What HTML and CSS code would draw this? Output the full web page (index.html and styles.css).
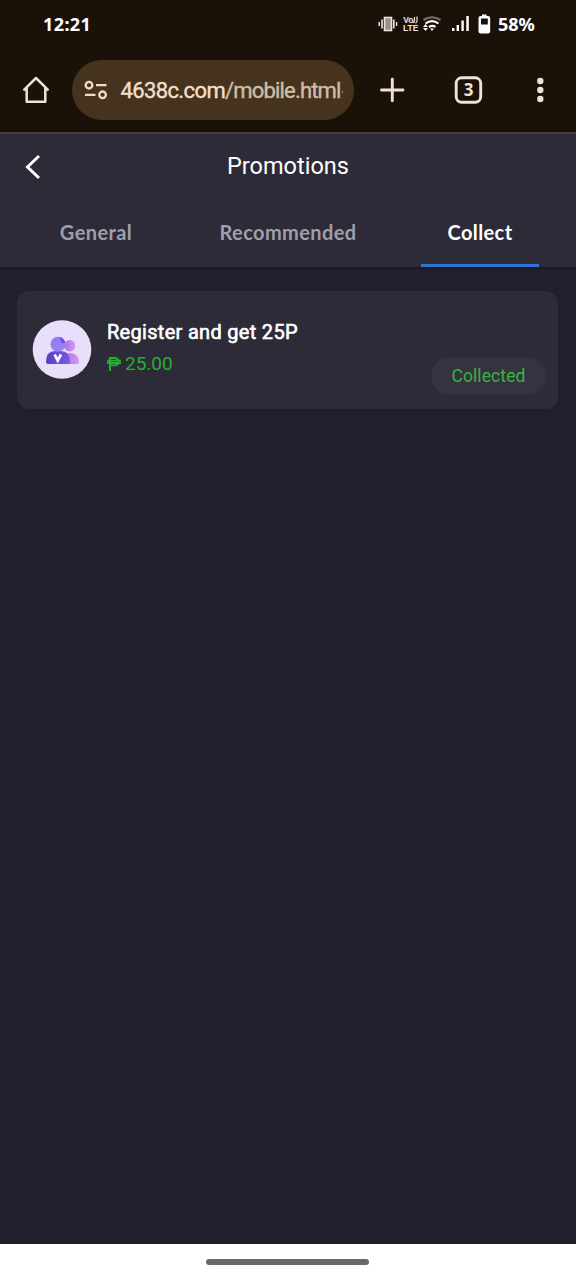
FILE: index.html
```html
<!DOCTYPE html>
<html lang="en">
<head>
<meta charset="utf-8">
<meta name="viewport" content="width=device-width, initial-scale=1">
<title>Promotions</title>
<link rel="stylesheet" href="styles.css">
</head>
<body>
<div class="screen">
  <div class="status">
    <span class="time">12:21</span>
    <svg class="status-icons" width="114" height="24" viewBox="378 12 114 24">
      <g fill="#e8e4e0">
        <path d="M378.500 22h1.500v4h-1.500zM381.200 19.500h1.600v9h-1.600zM393 19.500h1.600v9H393zM395.800 22h1.500v4h-1.500z"/>
        <rect x="384.500" y="17.500" width="7" height="13" fill="#96918c" stroke="#e8e4e0" stroke-width="1.600"/>
      </g>
      <path d="M414.500 17v3.500q0 2-2 2M417 16.500v4q0 2-1.500 2.500" fill="none" stroke="#e8e4e0" stroke-width="1.200"/>
      <text class="lte"><tspan x="403.300" y="22.600">Vo</tspan><tspan x="403" y="31">LTE</tspan></text>
      <g fill="none" stroke-width="2.100">
        <path d="M423.500 20q8.500-5.500 17 0" stroke="#77716b"/>
        <path d="M425.500 23.500q6.500-4.800 13 0M429 27q3.500-2.300 6.500 0" stroke="#fff"/>
      </g>
      <path d="M425.500 24l2.500 3h-5zM423 28h5l-2.500 3zM430 28.500h4l-2 2.500z" fill="#fff"/>
      <path d="M452 28h2.400v3H452zM456.600 25h2.400v6h-2.400zM461.400 20.500h2.400V31h-2.400zM466.300 16h2.500v15h-2.500z" fill="#fff"/>
      <path fill-rule="evenodd" fill="#fff" d="M482 14.500h4.500V16h1.500q2.200 0 2.200 2.200v13q0 2.200-2.200 2.200h-7.300q-2.200 0-2.200-2.200v-13q0-2.200 2.200-2.200H482zM481 18.600v6h6.800v-6z"/>
    </svg>
    <span class="battery">58%</span>
  </div>

  <div class="toolbar">
    <svg class="home" width="28" height="30" viewBox="0 0 28 30" fill="none" stroke="#f0e2d8" stroke-width="2.500" stroke-linejoin="round">
      <path d="M1.500 15.300 14 3l12.500 12.300M4.700 12.500V26.700h18.600V12.500"/>
    </svg>
    <div class="address">
      <svg width="24" height="20" viewBox="0 0 24 20" fill="none" stroke="#eddcc9" stroke-width="2.300">
        <circle cx="5" cy="5.200" r="3.300"/><path d="M12 5.200h10.500M1 14.800h10.500"/><circle cx="18.600" cy="14.800" r="3.300"/>
      </svg>
      <span class="url">4638c.com<span class="path">/mobile.html</span></span>
      <span class="cut"></span>
    </div>
    <svg class="actions" width="176" height="30" viewBox="375 75 176 30" fill="none" stroke="#f0e2d8" stroke-width="2.900" stroke-linecap="round">
      <path d="M381.500 90h21.500M392.300 79.200v21.600"/>
      <rect x="456.200" y="77.800" width="24.500" height="24.500" rx="5.500"/>
      <text class="count" x="468.500" y="96.300" text-anchor="middle">3</text>
      <g fill="#f0e2d8" stroke="none"><circle cx="540.300" cy="81" r="3.200"/><circle cx="540.300" cy="90" r="3.200"/><circle cx="540.300" cy="99" r="3.200"/></g>
    </svg>
  </div>

  <header class="header">
    <svg class="back" width="18" height="26" viewBox="0 0 18 26" fill="none" stroke="#fff" stroke-width="3"><path d="M15 2 3.500 13 15 24"/></svg>
    <h1>Promotions</h1>
  </header>
  <nav class="tabs">
    <a class="tab"><span>General</span></a>
    <a class="tab"><span>Recommended</span></a>
    <a class="tab active"><span>Collect</span></a>
  </nav>

  <main>
    <section class="card">
      <svg class="avatar" width="60" height="60" viewBox="32 319 60 60">
        <defs>
          <linearGradient id="head" x1="0" x2="1" y2="1"><stop stop-color="#8f78f0"/><stop offset="1" stop-color="#9a86f6"/></linearGradient>
          <linearGradient id="body" x1="0" x2="1"><stop stop-color="#5740c2"/><stop offset="1" stop-color="#7d58e4"/></linearGradient>
          <linearGradient id="friend" x1="0" x2="1"><stop stop-color="#b06ce8"/><stop offset="1" stop-color="#d39af5"/></linearGradient>
        </defs>
        <circle cx="62" cy="349.500" r="29.300" fill="#eadffb"/>
        <circle cx="69.700" cy="345.800" r="5.700" fill="url(#friend)"/>
        <path d="M63 364v-5q1-6 7-6 8 0 9 8 0 3-2 3z" fill="url(#friend)"/>
        <path d="M48 364q-2 0-2-2 0-11 9-11h6q9 0 9 11 0 2-2 2z" fill="url(#body)"/>
        <circle cx="58" cy="344.300" r="7.500" fill="url(#head)"/>
        <path d="M60 337.100a7.500 7.500 0 0 1 5.300 5.500q-2.500 1.500-4 0-1.500-1.800-1.300-5.500z" fill="#7050e2"/>
        <path d="M54.700 354.500 57.700 360.500l3.300-6" fill="none" stroke="#fff" stroke-width="2.700"/>
      </svg>
      <div class="details">
        <h2>Register and get 25P</h2>
        <p><svg width="15" height="14" viewBox="0 0 15 14" fill="none" stroke="#28ae35" stroke-width="1.900"><path d="M3 14V1h5a3.600 3.600 0 0 1 0 7.400H3M0 3.600h14M0 6h14"/></svg>25.00</p>
      </div>
      <span class="pill">Collected</span>
    </section>
  </main>

  <footer class="gesture"><div class="handle"></div></footer>
</div>
</body>
</html>
```
FILE: styles.css
```css
* { box-sizing: border-box; }
body { margin: 0; font-family: Roboto, sans-serif; background: #211f2b; }
h1, h2, p { margin: 0; font-weight: 400; }
svg { display: block; flex: none; }
.screen { width: 576px; height: 1280px; display: flex; flex-direction: column; overflow: hidden; white-space: nowrap; }

.status { height: 48px; background: #1a1109; color: #fff; display: flex; align-items: center; padding: 0 42px 0 43px; }
.time, .battery { font: 700 18px/24px "Noto Sans", sans-serif; }
.time { letter-spacing: 0.4px; }
.status-icons { margin-left: auto; }
.battery { width: 42px; padding-left: 6px; }
.lte { font: 700 8.5px "Liberation Sans", sans-serif; fill: #e8e4e0; }

.toolbar { height: 86px; background: #1a1109; border-bottom: 2px solid #463c3a; display: flex; align-items: center; padding-left: 22px; }
.address { width: 282px; height: 60px; border-radius: 30px; background: #46331d; margin-left: 22px; padding-left: 12px; display: flex; align-items: center; }
.url { margin: 2px 0 0 12.5px; color: #f1dfcc; font-size: 22px; line-height: 30px; -webkit-text-stroke: 0.4px; letter-spacing: -0.62px; }
.path { color: #cfbda5; letter-spacing: -0.82px; }
.cut { width: 1px; height: 2px; margin: 4px 0 0 1px; background: #a08b70; }
.actions { margin-left: 21px; }
.count { font: 700 17px "Noto Sans", sans-serif; fill: #f0e2d8; stroke: none; }

.header { height: 66px; background: #2d2b37; display: grid; grid-template-columns: 60px 1fr 60px; align-items: center; }
.back { margin-left: 24px; }
.header h1 { color: #fff; font-size: 23.5px; line-height: 30px; text-align: center; margin-bottom: 2px; }

.tabs { height: 67px; background: #2d2b37; display: grid; grid-template-columns: repeat(3, 1fr); }
.tab { display: flex; flex-direction: column; align-items: center; justify-content: space-between; padding-top: 18px; font: 700 20px/28px Lato, sans-serif; letter-spacing: 0.4px; color: #a09eac; }
.tab::after { content: ""; width: 118px; height: 3px; }
.active { color: #fff; }
.active::after { background: #2e75d4; }

main { flex: 1; padding: 24px 18px 24px 17px; background: linear-gradient(#1b1925, #211f2b 5px); }
.card { height: 118px; border-radius: 12px; background: #2d2b37; display: flex; padding: 0 12px 0 15px; }
.avatar { margin-top: 28px; }
.details { flex: 1; padding: 27px 0 0 15px; }
.details h2 { color: #fff; font-size: 20px; line-height: 28px; letter-spacing: 0.3px; -webkit-text-stroke: 0.6px #fff; }
.details p { color: #28ae35; font-size: 19px; line-height: 24px; margin-top: 6px; display: flex; align-items: center; gap: 3px; }
.pill { width: 115px; height: 36px; border-radius: 18px; align-self: flex-end; margin-bottom: 15px; background: #363341; color: #38b43d; font-size: 17.5px; line-height: 36px; letter-spacing: 0.1px; text-align: center; }

.gesture { height: 36px; background: #fff; display: flex; justify-content: center; padding: 15px 1px 0 0; }
.handle { width: 163px; height: 6px; border-radius: 3px; background: #686868; }
```
